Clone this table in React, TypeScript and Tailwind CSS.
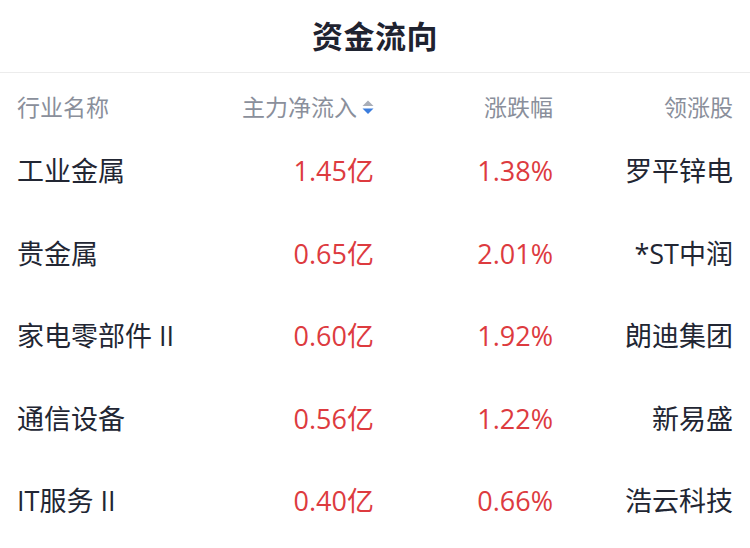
import React from "react";

const rows = [
  { name: "工业金属", flow: "1.45亿", pct: "1.38%", lead: "罗平锌电" },
  { name: "贵金属", flow: "0.65亿", pct: "2.01%", lead: "*ST中润" },
  { name: "家电零部件 II", flow: "0.60亿", pct: "1.92%", lead: "朗迪集团" },
  { name: "通信设备", flow: "0.56亿", pct: "1.22%", lead: "新易盛" },
  { name: "IT服务 II", flow: "0.40亿", pct: "0.66%", lead: "浩云科技" },
];

const font = { fontFamily: '"Open Sans", "Noto Sans CJK SC", sans-serif' };

export default function App() {
  return (
    <div className="w-[750px] h-[548px] bg-white overflow-hidden" style={font}>
      <div className="h-[73px] flex items-center justify-center border-b border-[#ececec]">
        <span className="text-[31px] font-semibold text-[#1f2330] tracking-[0.5px]">资金流向</span>
      </div>
      <div className="px-[17px] pt-[11px]">
        <div className="grid grid-cols-[183px_174px_179px_180px] h-[46px] items-center text-[23px] text-[#8a8f9b]">
          <div>行业名称</div>
          <div className="flex items-center justify-end gap-[5px]">
            <span>主力净流入</span>
            <svg width="12" height="15" viewBox="0 0 12 15" className="mt-[1px]">
              <path d="M6 0.5 L11.5 6 L0.5 6 Z" fill="#a9aeb8" />
              <path d="M0.5 8.5 L11.5 8.5 L6 14 Z" fill="#3b7ddd" />
            </svg>
          </div>
          <div className="text-right">涨跌幅</div>
          <div className="text-right">领涨股</div>
        </div>
        {rows.map((r) => (
          <div
            key={r.name}
            className="grid grid-cols-[183px_174px_179px_180px] h-[82.5px] items-center text-[27px]"
          >
            <div className="text-[#222633] whitespace-nowrap">{r.name}</div>
            <div className="text-right text-[#dd3b3f]">{r.flow}</div>
            <div className="text-right text-[#dd3b3f]">{r.pct}</div>
            <div className="text-right text-[#222633] whitespace-nowrap">{r.lead}</div>
          </div>
        ))}
      </div>
    </div>
  );
}
